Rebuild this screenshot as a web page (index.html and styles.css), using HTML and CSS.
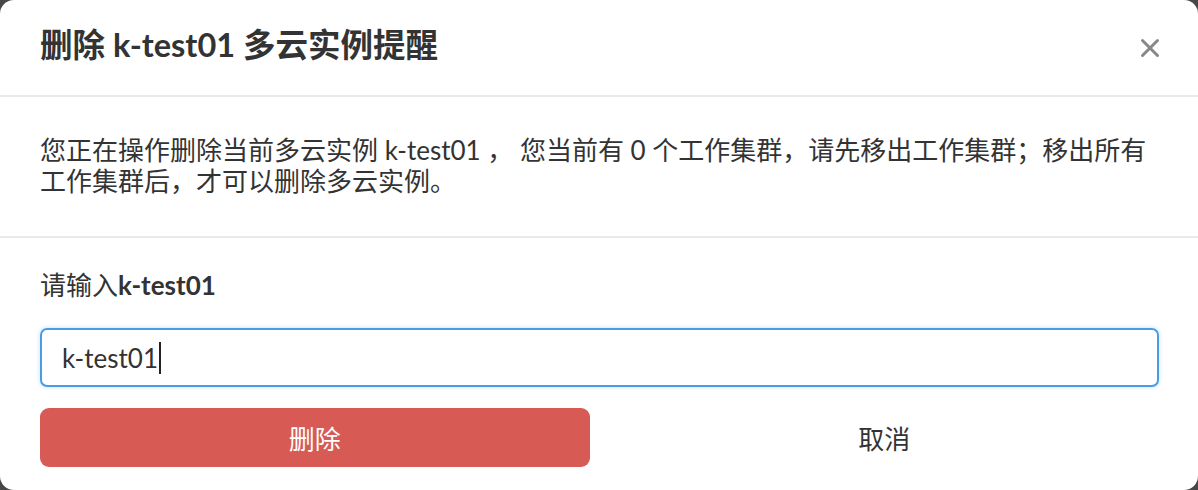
FILE: index.html
```html
<!DOCTYPE html>
<html lang="zh-CN">
<head>
<meta charset="utf-8">
<title>删除 k-test01 多云实例提醒</title>
<link rel="stylesheet" href="styles.css">
</head>
<body>
<div class="modal">
  <div class="modal-header">
    <h1 class="modal-title">删除 k-test01 多云实例提醒</h1>
    <button class="close-btn" aria-label="关闭">
      <svg width="20" height="20" viewBox="0 0 20 20"><path d="M2.5 2.5 L17.5 17.5 M17.5 2.5 L2.5 17.5" stroke="#86888c" stroke-width="3" stroke-linecap="round" fill="none"/></svg>
    </button>
  </div>
  <div class="modal-body">
    <p class="notice">您正在操作删除当前多云实例 k-test01 ， 您当前有 0 个工作集群，请先移出工作集群；移出所有工作集群后，才可以删除多云实例。</p>
  </div>
  <div class="modal-footer">
    <label class="confirm-label">请输入<strong>k-test01</strong></label>
    <div class="text-input" role="textbox">k-test01<span class="caret"></span></div>
    <div class="actions">
      <button class="btn btn-danger">删除</button>
      <button class="btn btn-plain">取消</button>
    </div>
  </div>
</div>
</body>
</html>
```
FILE: styles.css
```css
html, body {
  margin: 0;
  padding: 0;
  background: #474747;
}
body {
  font-family: "Lato", "Noto Sans CJK SC", sans-serif;
  color: #333;
}
.modal {
  width: 1198px;
  height: 490px;
  background: #fff;
  border-radius: 14px;
  overflow: hidden;
  display: flex;
  flex-direction: column;
}
.modal-header {
  height: 95px;
  border-bottom: 2px solid #e9e9ee;
  display: flex;
  align-items: center;
  justify-content: space-between;
  padding: 0 40px;
  box-sizing: content-box;
}
.modal-title {
  margin: 0 0 5px;
  font-size: 32.5px;
  font-weight: 700;
  color: #333;
  line-height: 40px;
}
.close-btn {
  border: 0;
  background: none;
  padding: 0;
  width: 20px;
  height: 20px;
  margin-right: -2px;
  display: flex;
}
.modal-body {
  padding: 38px 40px 39px;
  border-bottom: 2px solid #e9e9ee;
}
.notice {
  margin: 0;
  font-size: 26px;
  line-height: 31px;
  color: #333;
}
.modal-footer {
  padding: 32px 39px 0 40px;
  display: flex;
  flex-direction: column;
}
.confirm-label {
  font-size: 26px;
  line-height: 31px;
  color: #333;
}
.confirm-label strong {
  font-weight: 700;
}
.text-input {
  margin-top: 27px;
  height: 59px;
  box-sizing: border-box;
  border: 2px solid #4a9be6;
  border-radius: 7px;
  box-shadow: 0 0 4px rgba(74, 155, 230, 0.35);
  padding: 0 20px;
  font-size: 26px;
  display: flex;
  align-items: center;
  color: #333;
}
.caret {
  display: inline-block;
  width: 2px;
  height: 32px;
  background: #222;
  margin-left: 1px;
}
.actions {
  margin-top: 21px;
  display: flex;
  gap: 20px;
}
.btn {
  flex: 1;
  height: 59px;
  border: 0;
  border-radius: 9px;
  font-family: "Lato", "Noto Sans CJK SC", sans-serif;
  font-size: 26px;
  cursor: pointer;
}
.btn-danger {
  background: #d75a55;
  color: #fff;
}
.btn-plain {
  background: transparent;
  color: #333;
}
```
